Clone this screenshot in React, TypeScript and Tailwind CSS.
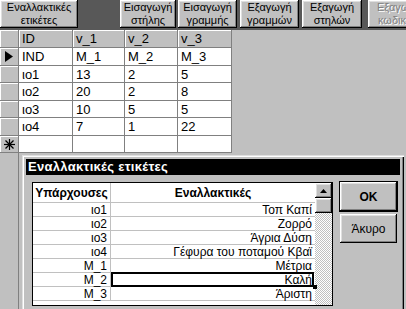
import type { ReactNode } from 'react';

const BEVEL =
  'shadow-[inset_-1px_-1px_0_#000,inset_1px_1px_0_#fff,inset_-2px_-2px_0_#808080,inset_2px_2px_0_#dfdfdf]';

const GRID_ROWS = [
  ['IND', 'M_1', 'M_2', 'M_3'],
  ['ιο1', '13', '2', '5'],
  ['ιο2', '20', '2', '8'],
  ['ιο3', '10', '5', '5'],
  ['ιο4', '7', '1', '22'],
  ['', '', '', ''],
];

const ROW_H = ['h-[18px]', 'h-[17px]', 'h-[18px]', 'h-[17px]', 'h-[18px]', 'h-[17px]'];

const LABELS: [string, string][] = [
  ['ιο1', 'Τοπ Καπί'],
  ['ιο2', 'Ζορρό'],
  ['ιο3', 'Άγρια Δύση'],
  ['ιο4', 'Γέφυρα του ποταμού Κβαϊ'],
  ['M_1', 'Μέτρια'],
  ['M_2', 'Καλή'],
  ['M_3', 'Άριστη'],
];

function ToolButton({
  width,
  disabled,
  children,
}: {
  width: string;
  disabled?: boolean;
  children: ReactNode;
}) {
  return (
    <div
      className={`${width} ${BEVEL} flex h-[28px] shrink-0 flex-col items-center justify-center bg-[#c0c0c0] text-center text-[11px] leading-[13px] ${
        disabled ? 'text-[#808080] [text-shadow:1px_1px_0_#fff]' : 'text-black'
      }`}
    >
      {children}
    </div>
  );
}

function Selector({ kind }: { kind?: 'current' | 'new' }) {
  return (
    <div className="flex h-full items-center justify-center border-r border-b border-[#808080] bg-[#c0c0c0] shadow-[inset_1px_1px_0_#fff]">
      {kind === 'current' && (
        <svg width="8" height="11" viewBox="0 0 8 11">
          <polygon points="0,0 8,5.5 0,11" fill="#000" />
        </svg>
      )}
      {kind === 'new' && (
        <svg width="11" height="11" viewBox="0 0 11 11" stroke="#000" strokeWidth="1.2">
          <line x1="5.5" y1="0" x2="5.5" y2="11" />
          <line x1="0" y1="5.5" x2="11" y2="5.5" />
          <line x1="1.5" y1="1.5" x2="9.5" y2="9.5" />
          <line x1="9.5" y1="1.5" x2="1.5" y2="9.5" />
        </svg>
      )}
    </div>
  );
}

function DataGrid() {
  return (
    <div className="grid w-[232px] grid-cols-[19px_54px_52px_53px_54px] text-[13px] leading-none">
      <div className="h-[18px] border-r border-b border-[#808080] bg-[#c0c0c0] shadow-[inset_1px_1px_0_#fff]" />
      {['ID', 'v_1', 'v_2', 'v_3'].map((h) => (
        <div
          key={h}
          className="flex h-[18px] items-center border-r border-b border-[#808080] bg-[#c0c0c0] pl-[3px] shadow-[inset_1px_1px_0_#fff]"
        >
          {h}
        </div>
      ))}
      {GRID_ROWS.map((row, i) => (
        <div key={i} className="contents">
          <div className={ROW_H[i]}>
            <Selector kind={i === 0 ? 'current' : i === GRID_ROWS.length - 1 ? 'new' : undefined} />
          </div>
          {row.map((cell, j) => (
            <div
              key={j}
              className={`${ROW_H[i]} flex items-center border-r border-b border-[#808080] bg-white pl-[3px]`}
            >
              {cell}
            </div>
          ))}
        </div>
      ))}
    </div>
  );
}

function DialogButton({ children, bold }: { children: ReactNode; bold?: boolean }) {
  return (
    <div
      className={`flex h-[29px] w-[57px] items-center justify-center bg-[#c0c0c0] text-[12px] ${BEVEL} ${
        bold ? 'font-bold outline outline-1 outline-black' : ''
      }`}
    >
      {children}
    </div>
  );
}

function Scrollbar() {
  return (
    <div className="flex w-[17px] shrink-0 flex-col bg-[repeating-conic-gradient(#fff_0_25%,#c0c0c0_0_50%)] bg-[length:2px_2px]">
      <div className={`flex h-[15px] items-center justify-center bg-[#c0c0c0] ${BEVEL}`}>
        <svg width="7" height="4" viewBox="0 0 7 4">
          <polygon points="3.5,0 7,4 0,4" fill="#000" />
        </svg>
      </div>
      <div className={`h-[15px] bg-[#c0c0c0] ${BEVEL}`} />
    </div>
  );
}

function LabelsDialog() {
  return (
    <div className="absolute left-[22px] top-[155px] h-[160px] w-[382px] bg-[#c0c0c0] p-[4px] shadow-[inset_1px_1px_0_#dfdfdf,inset_2px_2px_0_#fff,inset_-1px_-1px_0_#000,inset_-2px_-2px_0_#808080]">
      <div className="flex h-[16px] items-center bg-black pl-[2px] text-[13px] font-bold tracking-[0.3px] text-white">
        Εναλλακτικές ετικέτες
      </div>
      <div className="flex gap-[7px] pl-[6px] pt-[7px]">
        <div className="flex h-[124px] w-[301px] border border-black bg-white">
          <div className="grid w-[282px] grid-cols-[78px_204px] content-start text-[12px] leading-none">
            <div className="flex h-[20px] items-center justify-center border-r border-b border-[#c0c0c0] font-bold">
              Υπάρχουσες
            </div>
            <div className="flex h-[20px] items-center justify-center border-b border-[#c0c0c0] font-bold">
              Εναλλακτικές
            </div>
            {LABELS.map(([orig, alt]) => (
              <div key={orig} className="contents">
                <div className="flex h-[14px] items-center justify-end border-r border-b border-[#c0c0c0] pr-[3px]">
                  {orig}
                </div>
                <div className="relative flex h-[14px] items-center justify-end border-b border-[#c0c0c0] pr-[3px]">
                  {alt}
                  {orig === 'M_2' && (
                    <>
                      <div className="absolute -top-[1px] -bottom-[1px] left-0 right-[1px] border-2 border-black" />
                      <div className="absolute -bottom-[3px] -right-[2px] h-[4px] w-[4px] bg-black" />
                    </>
                  )}
                </div>
              </div>
            ))}
          </div>
          <Scrollbar />
        </div>
        <div className="flex flex-col gap-[3px]">
          <DialogButton bold>OK</DialogButton>
          <DialogButton>Άκυρο</DialogButton>
        </div>
      </div>
    </div>
  );
}

export default function App() {
  return (
    <div className="relative flex h-[309px] w-[406px] flex-col overflow-hidden bg-[#c0c0c0] font-['Liberation_Sans',Arial,sans-serif] text-black">
      <div className="flex h-[30px] shrink-0 bg-[#585858]">
        <ToolButton width="w-[78px]">
          <span>Εναλλακτικές</span>
          <span>ετικέτες</span>
        </ToolButton>
        <div className="w-[42px] shrink-0" />
        <ToolButton width="w-[56px]">
          <span>Εισαγωγή</span>
          <span>στήλης</span>
        </ToolButton>
        <div className="w-[2px] shrink-0" />
        <ToolButton width="w-[59px]">
          <span>Εισαγωγή</span>
          <span>γραμμής</span>
        </ToolButton>
        <div className="w-[3px] shrink-0" />
        <ToolButton width="w-[59px]">
          <span>Εξαγωγή</span>
          <span>γραμμών</span>
        </ToolButton>
        <div className="w-[3px] shrink-0" />
        <ToolButton width="w-[60px]">
          <span>Εξαγωγή</span>
          <span>στηλών</span>
        </ToolButton>
        <div className="w-[6px] shrink-0" />
        <ToolButton width="w-[62px]" disabled>
          <span>Εξαγωγή</span>
          <span>κωδικών</span>
        </ToolButton>
      </div>
      <DataGrid />
      <div className="flex flex-1">
        <div className="w-[19px] border-r border-[#808080]" />
      </div>
      <LabelsDialog />
    </div>
  );
}
